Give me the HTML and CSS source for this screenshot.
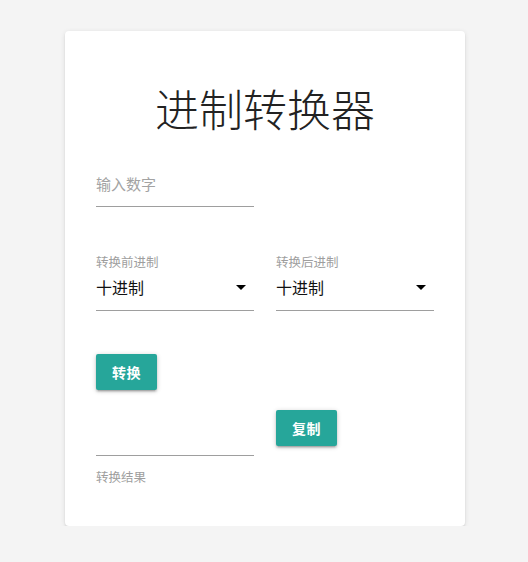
FILE: index.html
```html
<!DOCTYPE html>
<html lang="zh">
<head>
<meta charset="utf-8">
<title>进制转换器</title>
<link rel="stylesheet" href="styles.css">
</head>
<body>
<main class="card">
  <h1 class="title">进制转换器</h1>
  <div class="field field-number">
    <input class="text-input" type="text" placeholder="输入数字">
  </div>
  <div class="select-row">
    <div class="select-field">
      <span class="small-label">转换前进制</span>
      <div class="select-box">
        <span class="select-value">十进制</span>
        <svg class="caret" width="10" height="5" viewBox="0 0 10 5"><polygon points="0,0 10,0 5,5" fill="#000"/></svg>
      </div>
    </div>
    <div class="select-field">
      <span class="small-label">转换后进制</span>
      <div class="select-box">
        <span class="select-value">十进制</span>
        <svg class="caret" width="10" height="5" viewBox="0 0 10 5"><polygon points="0,0 10,0 5,5" fill="#000"/></svg>
      </div>
    </div>
  </div>
  <div class="action-row">
    <button class="btn" type="button">转换</button>
  </div>
  <div class="result-row">
    <div class="result-field">
      <input class="text-input" type="text">
      <span class="small-label result-label">转换结果</span>
    </div>
    <div class="copy-cell">
      <button class="btn" type="button">复制</button>
    </div>
  </div>
</main>
</body>
</html>
```

FILE: styles.css
```css
html, body {
  margin: 0;
  padding: 0;
}
body {
  padding-left: 2px;
  background: #f4f4f4;
  font-family: Roboto, "Noto Sans CJK SC", sans-serif;
  color: rgba(0, 0, 0, 0.87);
}
.card {
  box-sizing: border-box;
  width: 400px;
  margin: 31px auto 0;
  padding: 55px 31px 41px;
  background: #fff;
  border-radius: 4px;
  box-shadow: 0 2px 2px 0 rgba(0,0,0,0.07), 0 3px 1px -2px rgba(0,0,0,0.06), 0 1px 5px 0 rgba(0,0,0,0.1);
}
.title {
  margin: 0;
  font-family: "Noto Sans CJK SC", sans-serif;
  font-weight: 300;
  font-size: 44px;
  line-height: 44px;
  text-align: center;
  color: #222;
}
.field-number {
  margin-top: 29px;
  width: 158px;
}
.text-input {
  display: block;
  box-sizing: content-box;
  width: 158px;
  height: 47px;
  padding: 0;
  margin: 0;
  border: none;
  border-bottom: 1px solid #9e9e9e;
  background: transparent;
  outline: none;
  font-family: "Noto Sans CJK SC", sans-serif;
  font-size: 16px;
  color: rgba(0, 0, 0, 0.87);
}
.text-input::placeholder {
  color: #a3a3a3;
  font-size: 15px;
}
.select-row {
  margin-top: 47px;
  display: grid;
  grid-template-columns: 158px 158px;
  column-gap: 22px;
}
.select-field {
  display: flex;
  flex-direction: column;
}
.small-label {
  font-family: "Noto Sans CJK SC", sans-serif;
  font-size: 12.5px;
  line-height: 16px;
  color: #9e9e9e;
}
.select-box {
  display: flex;
  align-items: center;
  justify-content: space-between;
  height: 40px;
  padding-right: 8px;
  border-bottom: 1px solid #9e9e9e;
}
.select-value {
  font-family: "Noto Sans CJK SC", sans-serif;
  font-size: 16px;
  line-height: 20px;
  margin-top: -6px;
  color: #111;
}
.caret {
  display: block;
  margin-top: -6px;
}
.action-row {
  margin-top: 43px;
  display: flex;
}
.btn {
  height: 36px;
  padding: 0 16px;
  border: none;
  border-radius: 2px;
  background: #26a69a;
  color: #fff;
  font-family: "Noto Sans CJK SC", sans-serif;
  font-size: 14px;
  font-weight: 700;
  letter-spacing: 0.5px;
  box-shadow: 0 2px 2px 0 rgba(0,0,0,0.14), 0 3px 1px -2px rgba(0,0,0,0.12), 0 1px 5px 0 rgba(0,0,0,0.2);
  cursor: pointer;
}
.result-row {
  margin-top: 18px;
  display: grid;
  grid-template-columns: 158px 158px;
  column-gap: 22px;
  align-items: start;
}
.result-field {
  display: flex;
  flex-direction: column;
}
.result-label {
  margin-top: 13px;
}
.copy-cell {
  padding-top: 2px;
}
```
